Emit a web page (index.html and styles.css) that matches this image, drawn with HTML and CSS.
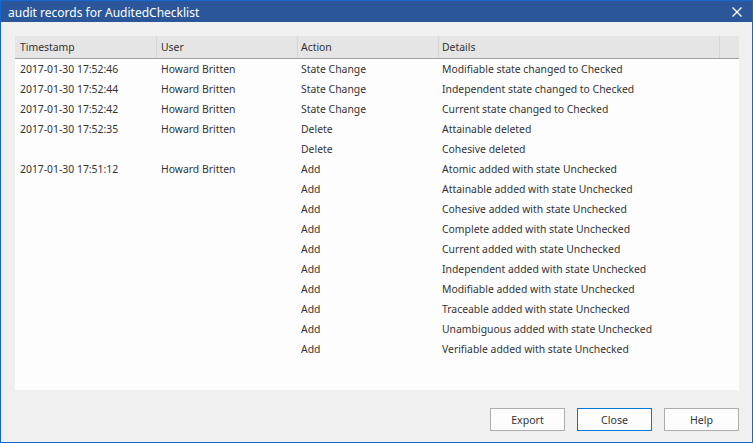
FILE: index.html
```html
<!DOCTYPE html>
<html>
<head>
<meta charset="utf-8">
<link rel="stylesheet" href="styles.css">
</head>
<body>
<div class="window">
  <div class="titlebar">
    <span class="title">audit records for AuditedChecklist</span>
    <svg class="close-x" width="10" height="10" viewBox="0 0 10 10"><path d="M0.5 0.5 L9.5 9.5 M9.5 0.5 L0.5 9.5" stroke="#fff" stroke-width="1.4"/></svg>
  </div>
  <div class="content">
    <div class="list">
      <div class="row head">
        <div class="c c1">Timestamp</div>
        <div class="c c2">User</div>
        <div class="c c3">Action</div>
        <div class="c c4">Details</div>
        <div class="c c5"></div>
      </div>
      <div class="row"><div class="c c1">2017-01-30 17:52:46</div><div class="c c2">Howard Britten</div><div class="c c3">State Change</div><div class="c c4">Modifiable state changed to Checked</div></div>
      <div class="row"><div class="c c1">2017-01-30 17:52:44</div><div class="c c2">Howard Britten</div><div class="c c3">State Change</div><div class="c c4">Independent state changed to Checked</div></div>
      <div class="row"><div class="c c1">2017-01-30 17:52:42</div><div class="c c2">Howard Britten</div><div class="c c3">State Change</div><div class="c c4">Current state changed to Checked</div></div>
      <div class="row"><div class="c c1">2017-01-30 17:52:35</div><div class="c c2">Howard Britten</div><div class="c c3">Delete</div><div class="c c4">Attainable deleted</div></div>
      <div class="row"><div class="c c1"></div><div class="c c2"></div><div class="c c3">Delete</div><div class="c c4">Cohesive deleted</div></div>
      <div class="row"><div class="c c1">2017-01-30 17:51:12</div><div class="c c2">Howard Britten</div><div class="c c3">Add</div><div class="c c4">Atomic added with state Unchecked</div></div>
      <div class="row"><div class="c c1"></div><div class="c c2"></div><div class="c c3">Add</div><div class="c c4">Attainable added with state Unchecked</div></div>
      <div class="row"><div class="c c1"></div><div class="c c2"></div><div class="c c3">Add</div><div class="c c4">Cohesive added with state Unchecked</div></div>
      <div class="row"><div class="c c1"></div><div class="c c2"></div><div class="c c3">Add</div><div class="c c4">Complete added with state Unchecked</div></div>
      <div class="row"><div class="c c1"></div><div class="c c2"></div><div class="c c3">Add</div><div class="c c4">Current added with state Unchecked</div></div>
      <div class="row"><div class="c c1"></div><div class="c c2"></div><div class="c c3">Add</div><div class="c c4">Independent added with state Unchecked</div></div>
      <div class="row"><div class="c c1"></div><div class="c c2"></div><div class="c c3">Add</div><div class="c c4">Modifiable added with state Unchecked</div></div>
      <div class="row"><div class="c c1"></div><div class="c c2"></div><div class="c c3">Add</div><div class="c c4">Traceable added with state Unchecked</div></div>
      <div class="row"><div class="c c1"></div><div class="c c2"></div><div class="c c3">Add</div><div class="c c4">Unambiguous added with state Unchecked</div></div>
      <div class="row"><div class="c c1"></div><div class="c c2"></div><div class="c c3">Add</div><div class="c c4">Verifiable added with state Unchecked</div></div>
    </div>
    <div class="buttons">
      <button class="btn">Export</button>
      <button class="btn primary">Close</button>
      <button class="btn">Help</button>
    </div>
  </div>
</div>
</body>
</html>
```

FILE: styles.css
```css
* { box-sizing: border-box; }
html, body { margin: 0; padding: 0; }
body {
  width: 753px;
  height: 443px;
  font-family: "Noto Sans", "Open Sans", sans-serif;
  font-size: 10.4px;
  color: #333;
  overflow: hidden;
}
.window {
  width: 753px;
  height: 443px;
  border: 1px solid #1466d0;
  background: #f0f0f0;
  display: flex;
  flex-direction: column;
}
.titlebar {
  height: 21px;
  background: #2b579a;
  color: #fff;
  display: flex;
  align-items: center;
  justify-content: space-between;
  padding: 0 10px 0 7px;
  font-size: 12px;
  flex-shrink: 0;
}
.title { line-height: 21px; padding-top: 1px; }
.close-x { display: block; }
.content {
  flex: 1;
  display: flex;
  flex-direction: column;
  padding: 14px 13px 0 14px;
}
.list {
  height: 354px;
  background: #fdfdfd;
}
.row {
  display: flex;
  height: 20px;
  line-height: 20px;
}
.row.head {
  height: 23px;
  background: #e5e5e5;
  border-bottom: 1px solid #a0a0a0;
}
.c { white-space: nowrap; overflow: hidden; padding-left: 5px; }
.c1 { width: 141px; }
.c2 { width: 141px; }
.c3 { width: 141px; padding-left: 4px; }
.c4 { width: 281px; padding-left: 4px; }
.c5 { flex: 1; }
.head .c { line-height: 22px; }
.head .c2, .head .c5 { border-left: 1px solid #d6d6d6; padding-left: 4px; }
.head .c3, .head .c4 { border-left: 1px solid #d6d6d6; padding-left: 3px; }
.buttons {
  display: flex;
  justify-content: flex-end;
  gap: 12px;
  margin-top: 18px;
}
.btn {
  width: 75px;
  height: 23px;
  border: 1px solid #adadad;
  background: #fdfdfd;
  font-family: inherit;
  font-size: 10.6px;
  color: #333;
  padding: 0;
}
.btn.primary { border-color: #0078d7; }
```
